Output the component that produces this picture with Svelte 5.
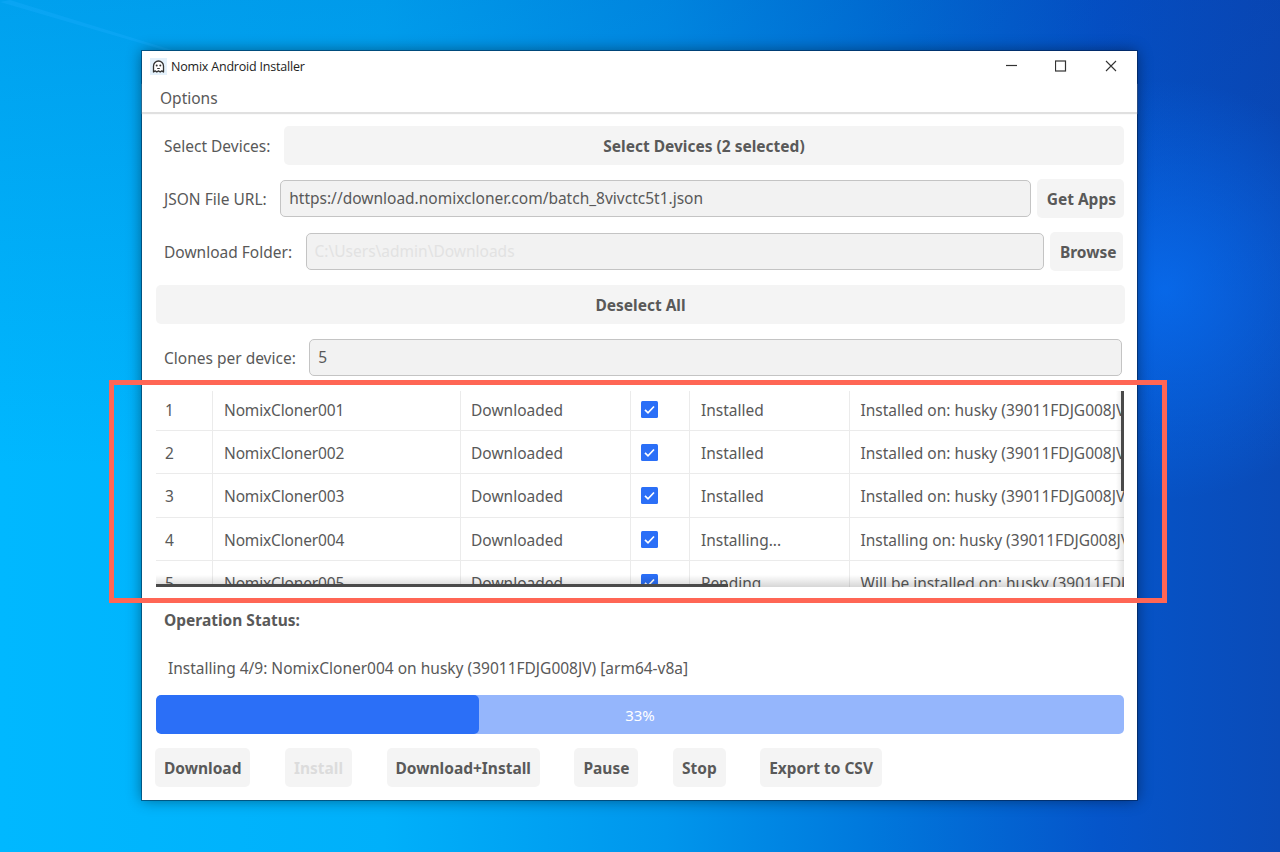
<script>
  const rows = [
    ['1', 'NomixCloner001', 'Installed', 'Installed on: husky (39011FDJG008JV) [arm64-v8a]'],
    ['2', 'NomixCloner002', 'Installed', 'Installed on: husky (39011FDJG008JV) [arm64-v8a]'],
    ['3', 'NomixCloner003', 'Installed', 'Installed on: husky (39011FDJG008JV) [arm64-v8a]'],
    ['4', 'NomixCloner004', 'Installing...', 'Installing on: husky (39011FDJG008JV) [arm64-v8a]'],
    ['5', 'NomixCloner005', 'Pending', 'Will be installed on: husky (39011FDJG008JV) [arm64-v8a]']
  ];
</script>

<div class="desktop">
  <svg class="streak" width="240" height="60" viewBox="0 0 240 60">
    <path d="M10 0L172 50L164 50L0 2z" fill="#1fb0ff" opacity="0.3" />
  </svg>
  <div class="window">
    <div class="titlebar">
      <svg class="appicon" width="17" height="17" viewBox="0 0 17 17">
        <rect width="17" height="17" fill="#e4f1fb" />
        <path d="M3.500 14V8a5 5 0 0 1 10 0v6l-1.700-1.100-1.600 1.100-1.700-1.100-1.700 1.100-1.600-1.100z" fill="#fff" stroke="#333" stroke-width="1.300" stroke-linejoin="round" />
        <circle cx="6.700" cy="7.500" r="1" fill="#333" />
        <circle cx="10.300" cy="7.500" r="1" fill="#333" />
        <path d="M7.200 10.500h2.600" stroke="#333" stroke-width="1" />
      </svg>
      <span class="title">Nomix Android Installer</span>
      <div class="controls">
        <svg width="12" height="12" viewBox="0 0 12 12"><path d="M1 5.500h11" stroke="#333" stroke-width="1.200" /></svg>
        <svg width="12" height="12" viewBox="0 0 12 12"><rect x="0.500" y="1" width="10" height="10" fill="none" stroke="#333" stroke-width="1.200" /></svg>
        <svg width="12" height="12" viewBox="0 0 12 12"><path d="M1 1l10 10M11 1L1 11" stroke="#333" stroke-width="1.100" /></svg>
      </div>
    </div>
    <div class="menubar"><span>Options</span></div>

    <div class="content">
      <div class="row">
        <span class="label">Select Devices:</span>
        <button class="btn grow">Select Devices (2 selected)</button>
      </div>
      <div class="row">
        <span class="label">JSON File URL:</span>
        <div class="input grow">https://download.nomixcloner.com/batch_8vivctc5t1.json</div>
        <button class="btn apps">Get Apps</button>
      </div>
      <div class="row">
        <span class="label">Download Folder:</span>
        <div class="input grow faded">C:\Users\admin\Downloads</div>
        <button class="btn browse">Browse</button>
      </div>
      <button class="btn full">Deselect All</button>
      <div class="row">
        <span class="label">Clones per device:</span>
        <div class="input grow clones">5</div>
      </div>

      <div class="table">
        <div class="rows">
          {#each rows as r}
            <div class="tr">
              <div class="td">{r[0]}</div>
              <div class="td name">{r[1]}</div>
              <div class="td dl">Downloaded</div>
              <div class="td check">
                <svg width="17" height="17" viewBox="0 0 17 17">
                  <rect width="17" height="17" rx="1.500" fill="#2b6ff7" />
                  <path d="M4 8.800l3 3 6-6.300" fill="none" stroke="#fff" stroke-width="1.700" />
                </svg>
              </div>
              <div class="td">{r[2]}</div>
              <div class="td">{r[3]}</div>
            </div>
          {/each}
        </div>
        <div class="fade-b"></div>
        <div class="fade-r"></div>
        <div class="sb-h"></div>
        <div class="sb-v"></div>
      </div>

      <div class="status-head">Operation Status:</div>
      <div class="status">Installing 4/9: NomixCloner004 on husky (39011FDJG008JV) [arm64-v8a]</div>

      <div class="progress">
        <div class="fill"></div>
        <span>33%</span>
      </div>

      <div class="actions">
        <button class="btn">Download</button>
        <button class="btn off">Install</button>
        <button class="btn">Download+Install</button>
        <button class="btn">Pause</button>
        <button class="btn">Stop</button>
        <button class="btn">Export to CSV</button>
      </div>
    </div>
  </div>
  <div class="highlight"></div>
</div>

<style>
  :global(body) { margin: 0; }
  .desktop {
    position: relative;
    width: 1280px;
    height: 852px;
    overflow: hidden;
    font-family: "Noto Sans", sans-serif;
    background:
      radial-gradient(circle 210px at 1165px 290px, rgba(8, 112, 245, 0.75) 0%, rgba(8, 112, 245, 0) 100%),
      linear-gradient(to bottom, rgba(0, 40, 150, 0.16) 0%, rgba(0, 40, 150, 0) 55%),
      linear-gradient(90deg, #00b8ff 0%, #00b0fa 30%, #0096ec 52%, #0078dc 68%, #0555ca 86%, #0a4bb8 100%);
  }
  .streak { position: absolute; left: 0; top: 0; }
  .window {
    position: absolute;
    left: 142px;
    top: 51px;
    width: 995px;
    height: 749px;
    background: #fff;
    box-shadow: 0 0 0 1px rgba(0, 20, 50, 0.45), 0 0 14px rgba(0, 0, 0, 0.45);
    color: #595959;
    font-size: 15.500px;
  }
  .titlebar {
    height: 31px;
    display: flex;
    align-items: center;
    padding-left: 8px;
    color: #222;
  }
  .appicon { flex: none; }
  .title {
    margin-left: 4px;
    font-size: 12.500px;
    letter-spacing: -0.2px;
    font-family: "Open Sans", sans-serif;
  }
  .controls {
    margin: -1px 0 0 auto;
    display: flex;
    gap: 38px;
    padding-right: 20px;
    align-items: center;
  }
  .controls svg { display: block; }
  .menubar {
    height: 30px;
    padding: 2px 0 0 18px;
    box-sizing: border-box;
    line-height: 29px;
    margin-bottom: 2px;
    box-shadow: 0 2px 1px #e0e0e0;
  }
  .content {
    padding: 12px 13px 0 14px;
    display: flex;
    flex-direction: column;
  }
  .row {
    display: flex;
    align-items: center;
    gap: 6px;
    height: 39px;
    margin-bottom: 14px;
  }
  .label { padding-left: 8px; margin-right: 7.500px; white-space: nowrap; }
  .grow { flex: 1; min-width: 0; }
  .btn {
    height: 39px;
    border: none;
    border-radius: 5px;
    background: #f4f4f4;
    font: 700 15.500px "Noto Sans", sans-serif;
    color: #595959;
    padding: 0 9px;
    white-space: nowrap;
  }
  .apps { padding: 0 8px 0 10px; }
  .browse { padding: 0 6.500px 0 9.500px; margin-right: 1px; }
  .full { width: 969px; margin-bottom: 14px; flex: none; }
  .off { color: #dcdcdc; }
  .input {
    height: 37px;
    line-height: 35px;
    box-sizing: border-box;
    border: 1px solid #c4c4c4;
    border-radius: 5px;
    background: #f2f2f2;
    padding-left: 8px;
    color: #595959;
    white-space: nowrap;
    overflow: hidden;
  }
  .clones { margin-right: 2px; }
  .faded { color: #e2e2e2; }
  .table {
    position: relative;
    height: 196px;
    overflow: hidden;
  }
  .rows { margin-top: -3.300px; }
  .tr {
    display: grid;
    grid-template-columns: 57px 248px 170px 59px 159.500px 400px;
    width: 1094px;
    height: 43.300px;
    box-sizing: border-box;
    border-bottom: 1px solid #ebebeb;
  }
  .td {
    padding: 3px 0 0 11px;
    line-height: 39px;
    border-right: 1px solid #ebebeb;
    white-space: nowrap;
    overflow: hidden;
  }
  .td:first-child { padding-left: 9px; }
  .td:last-child { border-right: none; }
  .name { letter-spacing: -0.15px; }
  .dl { padding-left: 10px; }
  .check { padding: 13px 0 0 10px; line-height: 0; }
  .check svg { display: block; }
  .fade-b {
    position: absolute;
    left: 0; right: 0; bottom: 0;
    height: 12px;
    background: linear-gradient(to bottom, rgba(0, 0, 0, 0), rgba(0, 0, 0, 0.16));
  }
  .fade-r {
    position: absolute;
    top: 0; right: 0; bottom: 0;
    width: 8px;
    background: linear-gradient(to right, rgba(0, 0, 0, 0), rgba(0, 0, 0, 0.1));
  }
  .sb-h {
    position: absolute;
    left: 0; bottom: 0;
    width: 572px;
    height: 3px;
    background: #4a4a4a;
  }
  .sb-v {
    position: absolute;
    right: 0; top: 0;
    width: 3px;
    height: 100px;
    background: #4a4a4a;
  }
  .status-head { margin: 22px 0 0 8px; font-weight: 700; line-height: 22px; }
  .status { margin: 26px 0 0 12px; line-height: 22px; }
  .progress {
    position: relative;
    margin-top: 16px;
    height: 39px;
    border-radius: 5px;
    background: #95b6fc;
    display: flex;
    align-items: center;
    justify-content: center;
    overflow: hidden;
    color: #fff;
    font-size: 15px;
  }
  .fill {
    position: absolute;
    left: 0; top: 0; bottom: 0;
    width: 323px;
    background: #2b6ff7;
    border-radius: 5px;
  }
  .progress span { position: relative; }
  .actions {
    display: flex;
    justify-content: space-between;
    width: 727px;
    margin: 14px 0 0 -1px;
  }
  .highlight {
    position: absolute;
    left: 109px;
    top: 380px;
    width: 1058px;
    height: 223px;
    box-sizing: border-box;
    border: 5px solid #ff6655;
  }
</style>
